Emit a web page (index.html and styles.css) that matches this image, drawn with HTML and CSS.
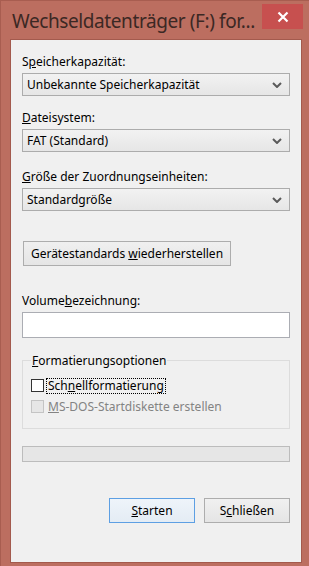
FILE: index.html
```html
<!DOCTYPE html>
<html>
<head>
    <title>Wechseldatenträger (F:) formatieren</title>
    <link rel="stylesheet" href="styles.css">
</head>
<body>
    <div id="window">
    <div id="titlebar">
        <div class="title">Wechseldatenträger (F:) for...</div>
        <div class="close-button">
            <svg width="12" height="12" viewBox="0 0 12 12">
                <path d="M1.5 1.5 L10.5 10.5 M10.5 1.5 L1.5 10.5" stroke="#ffffff" stroke-width="2.2" fill="none"/>
            </svg>
        </div>
    </div>
    <div id="client">
        <div class="label first">S<u>p</u>eicherkapazität:</div>
        <div class="combo">
            <span>Unbekannte Speicherkapazität</span>
            <svg class="chevron" width="10" height="6" viewBox="0 0 10 6"><path d="M1 1 L5 5 L9 1" stroke="#5a5a5a" stroke-width="2" fill="none"/></svg>
        </div>

        <div class="label"><u>D</u>ateisystem:</div>
        <div class="combo">
            <span>FAT (Standard)</span>
            <svg class="chevron" width="10" height="6" viewBox="0 0 10 6"><path d="M1 1 L5 5 L9 1" stroke="#5a5a5a" stroke-width="2" fill="none"/></svg>
        </div>

        <div class="label third"><u>G</u>röße der Zuordnungseinheiten:</div>
        <div class="combo">
            <span>Standardgröße</span>
            <svg class="chevron" width="10" height="6" viewBox="0 0 10 6"><path d="M1 1 L5 5 L9 1" stroke="#5a5a5a" stroke-width="2" fill="none"/></svg>
        </div>

        <div class="button-row restore-row">
            <button class="win-button wide">Gerätestandards <u>w</u>iederherstellen</button>
        </div>

        <div class="label volume-label">Volume<u>b</u>ezeichnung:</div>
        <div class="textbox"></div>

        <fieldset class="groupbox">
            <legend><u>F</u>ormatierungsoptionen</legend>
            <div class="check-row">
                <span class="checkbox"></span>
                <span class="check-label focused">Sch<u>n</u>ellformatierung</span>
            </div>
            <div class="check-row disabled">
                <span class="checkbox"></span>
                <span class="check-label"><u>M</u>S-DOS-Startdiskette erstellen</span>
            </div>
        </fieldset>

        <div class="progress"></div>

        <div class="button-row footer">
            <button class="win-button default"><u>S</u>tarten</button>
            <button class="win-button">S<u>c</u>hließen</button>
        </div>
    </div>
    </div>
</body>
</html>
```

FILE: styles.css
```css
body {
    margin: 0;
    background-color: #bc6e60;
    font-family: "Noto Sans", "Open Sans", sans-serif;
}

#window {
    width: 309px;
    height: 566px;
    display: flex;
    flex-direction: column;
    background-color: #bc6e60;
    border-top: 1px solid #a85d50;
    border-left: 1px solid #a85d50;
    box-sizing: border-box;
}

#titlebar {
    height: 38px;
    display: flex;
    align-items: flex-start;
    justify-content: space-between;
}

.title {
    margin-top: 8px;
    margin-left: 11px;
    font-size: 19px;
    letter-spacing: -0.4px;
    line-height: 24px;
    color: #3b2824;
    white-space: nowrap;
}

.close-button {
    flex-shrink: 0;
    width: 41px;
    height: 25px;
    margin-top: 3px;
    margin-right: 6px;
    background-color: #c7504f;
    display: flex;
    align-items: center;
    justify-content: center;
}

#client {
    margin-left: 9px;
    margin-right: 7px;
    height: 524px;
    background-color: #f0f0f0;
    border: 1px solid #a35a4d;
    box-sizing: border-box;
    padding: 0 11px;
    display: flex;
    flex-direction: column;
    font-size: 12px;
    color: #000000;
}

.label {
    height: 15px;
    line-height: 15px;
    margin-top: 14px;
    margin-bottom: 4px;
}

.label.first {
    margin-top: 14px;
}

.label.third {
    margin-top: 17px;
}

.combo {
    height: 23px;
    border: 1px solid #acacac;
    box-sizing: border-box;
    background: linear-gradient(#f2f2f2, #e6e6e6);
    display: flex;
    align-items: center;
    justify-content: space-between;
    padding: 0 7px 0 4px;
}

.chevron {
    display: block;
}

.button-row {
    display: flex;
}

.restore-row {
    margin-top: 30px;
}

.win-button {
    font-family: inherit;
    font-size: 12px;
    color: #000000;
    height: 25px;
    border: 1px solid #adadad;
    background: linear-gradient(#f0f0f0, #e5e5e5);
    padding: 0;
    margin: 0;
}

.win-button.wide {
    width: 208px;
    margin-left: 1px;
}

.volume-label {
    margin-top: 27px;
}

.textbox {
    height: 26px;
    background-color: #ffffff;
    border: 1px solid #abadb3;
    box-sizing: border-box;
}

.groupbox {
    margin: 15px 0 0 0;
    padding: 10px 8px 10px 8px;
    border: 1px solid #dcdcdc;
    height: 76px;
    box-sizing: border-box;
}

.groupbox legend {
    padding: 0 1px;
    line-height: 15px;
}

.check-row {
    display: flex;
    align-items: center;
    height: 15px;
    margin-bottom: 6px;
}

.checkbox {
    width: 13px;
    height: 13px;
    border: 1px solid #333333;
    background-color: #ffffff;
    box-sizing: border-box;
    margin-right: 3px;
}

.check-label {
    line-height: 14px;
    padding: 0 1px;
}

.check-label.focused {
    outline: 1px dotted #000000;
}

.check-row.disabled {
    color: #838383;
}

.check-row.disabled .checkbox {
    border-color: #c4c4c4;
    background-color: #e6e6e6;
}

.progress {
    margin-top: 17px;
    height: 16px;
    border: 1px solid #bcbcbc;
    background-color: #e6e6e6;
    box-sizing: border-box;
}

.footer {
    margin-top: 36px;
    justify-content: flex-end;
    gap: 9px;
}

.footer .win-button {
    width: 86px;
}

.win-button.default {
    border-color: #5d9fe3;
    background: linear-gradient(#eef4fa, #e4ecf4);
}
```
